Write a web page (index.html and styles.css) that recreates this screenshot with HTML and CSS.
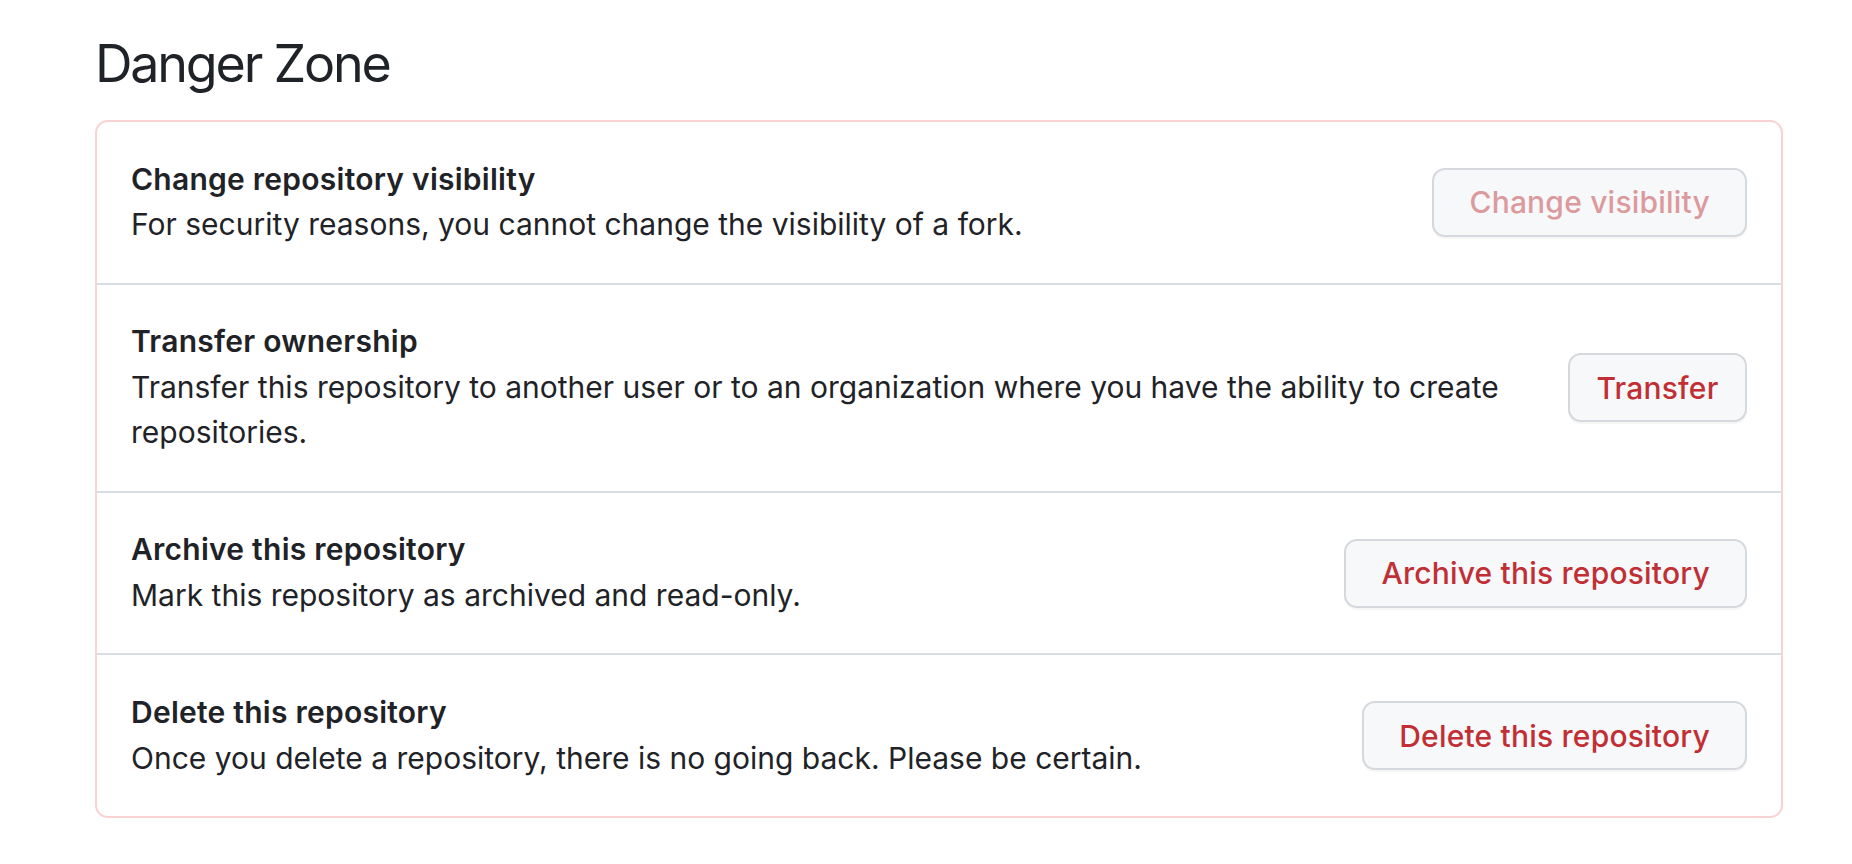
FILE: index.html
```html
<!DOCTYPE html>
<html lang="en">
<head>
<meta charset="utf-8">
<title>Danger Zone</title>
<link rel="stylesheet" href="styles.css">
</head>
<body>
<div class="page">
  <h2 class="heading">Danger Zone</h2>
  <div class="box">
    <div class="row">
      <div class="info">
        <div class="row-title">Change repository visibility</div>
        <div class="row-desc">For security reasons, you cannot change the visibility of a fork.</div>
      </div>
      <button class="btn btn-disabled" disabled>Change visibility</button>
    </div>
    <div class="row">
      <div class="info">
        <div class="row-title">Transfer ownership</div>
        <div class="row-desc">Transfer this repository to another user or to an organization where you have the ability to create repositories.</div>
      </div>
      <button class="btn btn-compact">Transfer</button>
    </div>
    <div class="row">
      <div class="info">
        <div class="row-title">Archive this repository</div>
        <div class="row-desc">Mark this repository as archived and read-only.</div>
      </div>
      <button class="btn">Archive this repository</button>
    </div>
    <div class="row">
      <div class="info">
        <div class="row-title">Delete this repository</div>
        <div class="row-desc">Once you delete a repository, there is no going back. Please be certain.</div>
      </div>
      <button class="btn">Delete this repository</button>
    </div>
  </div>
</div>
</body>
</html>
```

FILE: styles.css
```css
html, body {
  margin: 0;
  padding: 0;
  background: #ffffff;
}

body {
  font-family: Inter, "Noto Sans", "Liberation Sans", sans-serif;
  color: #1f2328;
}

.page {
  padding: 31px 69px 0 95px;
}

.heading {
  margin: 0 0 24px 0;
  font-size: 52px;
  line-height: 65px;
  font-weight: 400;
  color: #1f2328;
  letter-spacing: -2.2px;
}

.box {
  border: 2px solid #f9d2d2;
  border-radius: 13px;
  overflow: hidden;
}

.row {
  display: flex;
  align-items: center;
  gap: 35px;
  padding: 34.7px 34px;
  border-top: 2px solid #d8dee4;
}

.row:first-child {
  border-top: none;
}

.info {
  flex: 1 1 auto;
  min-width: 0;
}

.row-title {
  font-size: 30px;
  line-height: 45.6px;
  font-weight: 600;
  letter-spacing: 0.25px;
  color: #1f2328;
}

.row-desc {
  font-size: 30px;
  line-height: 45.6px;
  font-weight: 400;
  color: #1f2328;
}

.btn {
  flex: 0 0 auto;
  height: 69px;
  padding: 0 35px;
  border: 2px solid #d5d8dc;
  border-radius: 13px;
  background: #f6f8fa;
  box-shadow: 0 2px 0 rgba(31, 35, 40, 0.04);
  font-family: Inter, "Noto Sans", "Liberation Sans", sans-serif;
  font-size: 30px;
  font-weight: 500;
  letter-spacing: 0.2px;
  color: #c12f34;
  cursor: pointer;
}

.btn-compact {
  padding: 0 26.5px;
}

.btn-disabled {
  color: #dc9a9c;
  cursor: default;
}
```
